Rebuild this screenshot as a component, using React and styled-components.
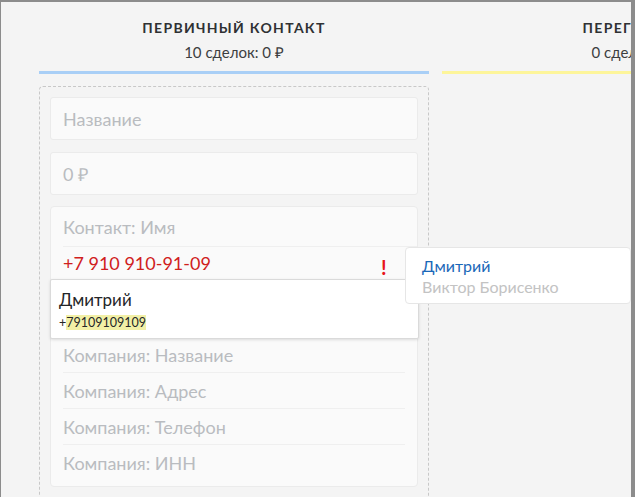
import React from 'react';
import styled, { createGlobalStyle } from 'styled-components';

const Global = createGlobalStyle`
  html, body {
    margin: 0;
    padding: 0;
    background: #f4f4f4;
    font-family: Lato, "Open Sans", "Liberation Sans", sans-serif;
  }
  * { box-sizing: border-box; }
`;

const Frame = styled.div`
  width: 635px;
  height: 497px;
  overflow: hidden;
  background: #f4f4f4;
  border-top: 2px solid #8c8c8c;
  border-left: 1px solid #8c8c8c;
  border-right: 4px solid #8c8c8c;
  position: relative;
`;

const Board = styled.div`
  display: flex;
  gap: 13px;
  padding-left: 38px;
`;

const Column = styled.div`
  flex: 0 0 390px;
  display: flex;
  flex-direction: column;
`;

const Header = styled.div`
  padding-top: 16px;
  text-align: center;
  white-space: nowrap;
`;

const Title = styled.div`
  font-size: 14px;
  line-height: 20px;
  font-weight: 700;
  letter-spacing: 1.3px;
  color: #2f3133;
`;

const Sub = styled.div`
  margin-top: 4px;
  font-size: 15px;
  line-height: 20px;
  color: #3c3e40;
`;

const Line = styled.div`
  margin-top: 9px;
  height: 3px;
  background: ${p => p.color};
`;

const Drop = styled.div`
  margin-top: 12px;
  border: 1px dashed #c8c8c8;
  border-radius: 4px;
  padding: 10px 10px 0;
  height: 430px;
  display: flex;
  flex-direction: column;
  gap: 12px;
`;

const Input = styled.div`
  height: 43px;
  background: #fafafa;
  border: 1px solid #ebebeb;
  border-radius: 3px;
  padding: 0 12px;
  display: flex;
  align-items: center;
  font-size: 18px;
  color: #b9bcc0;
`;

const Card = styled.div`
  background: #fafafa;
  border: 1px solid #ebebeb;
  border-radius: 4px;
  padding: 0 12px 5px 12px;
  position: relative;
  margin-top: -1px;
`;

const Row = styled.div`
  height: ${p => p.h || 36}px;
  display: flex;
  align-items: center;
  font-size: 18px;
  color: #b9bcc0;
  border-bottom: ${p => (p.last ? 'none' : '1px solid #efefef')};
  margin-right: ${p => (p.wide ? '-12px' : '0')};
`;

const PhoneRow = styled.div`
  height: 37px;
  display: flex;
  align-items: flex-start;
  padding-top: 5px;
  font-size: 18px;
  color: #d0201c;
  position: relative;
`;

const Warn = styled.span`
  position: absolute;
  left: 318px;
  top: 8px;
  font-size: 20px;
  font-weight: 700;
  color: #e8141a;
`;

const Suggest = styled.div`
  position: absolute;
  left: -13px;
  right: -14px;
  top: 32px;
  height: 60px;
  background: #fff;
  border: 1px solid #dadada;
  border-radius: 2px;
  box-shadow: 0 1px 3px rgba(0, 0, 0, 0.12);
  padding: 8px 8px 0;
  z-index: 2;
`;

const SuggestName = styled.div`
  font-size: 17px;
  line-height: 24px;
  color: #242628;
`;

const SuggestPhone = styled.div`
  font-size: 12.5px;
  line-height: 18px;
  color: #242628;
  margin-top: 2px;
`;

const Mark = styled.mark`
  background: #f2f0a6;
  color: inherit;
`;

const Popup = styled.div`
  position: absolute;
  left: 404px;
  top: 245px;
  width: 226px;
  height: 57px;
  background: #fff;
  border: 1px solid #e6e6e6;
  border-radius: 4px;
  padding: 7px 16px;
  font-size: 16px;
  line-height: 21px;
  z-index: 3;
`;

const PopName = styled.div`
  color: ${p => p.color};
`;

const companyFields = ['Компания: Название', 'Компания: Адрес', 'Компания: Телефон', 'Компания: ИНН'];

export default function App() {
  return (
    <Frame>
      <Global />
      <Board>
        <Column>
          <Header>
            <Title>ПЕРВИЧНЫЙ КОНТАКТ</Title>
            <Sub>10 сделок: 0 ₽</Sub>
          </Header>
          <Line color="#a9cff6" />
          <Drop>
            <Input>Название</Input>
            <Input>0 ₽</Input>
            <Card>
              <Row h={40} wide>Контакт: Имя</Row>
              <PhoneRow>
                +7 910 910-91-09
                <Warn>!</Warn>
                <Suggest>
                  <SuggestName>Дмитрий</SuggestName>
                  <SuggestPhone>+<Mark>79109109109</Mark></SuggestPhone>
                </Suggest>
              </PhoneRow>
              <Row h={53}>Контакт: Email</Row>
              {companyFields.map((f, i) => (
                <Row key={f} last={i === companyFields.length - 1}>{f}</Row>
              ))}
            </Card>
          </Drop>
        </Column>
        <Column>
          <Header>
            <Title>ПЕРЕГОВОРЫ</Title>
            <Sub>0 сделок: 0 ₽</Sub>
          </Header>
          <Line color="#fdf59a" />
        </Column>
      </Board>
      <Popup>
        <PopName color="#1a68b8">Дмитрий</PopName>
        <PopName color="#c3c3c3">Виктор Борисенко</PopName>
      </Popup>
    </Frame>
  );
}
